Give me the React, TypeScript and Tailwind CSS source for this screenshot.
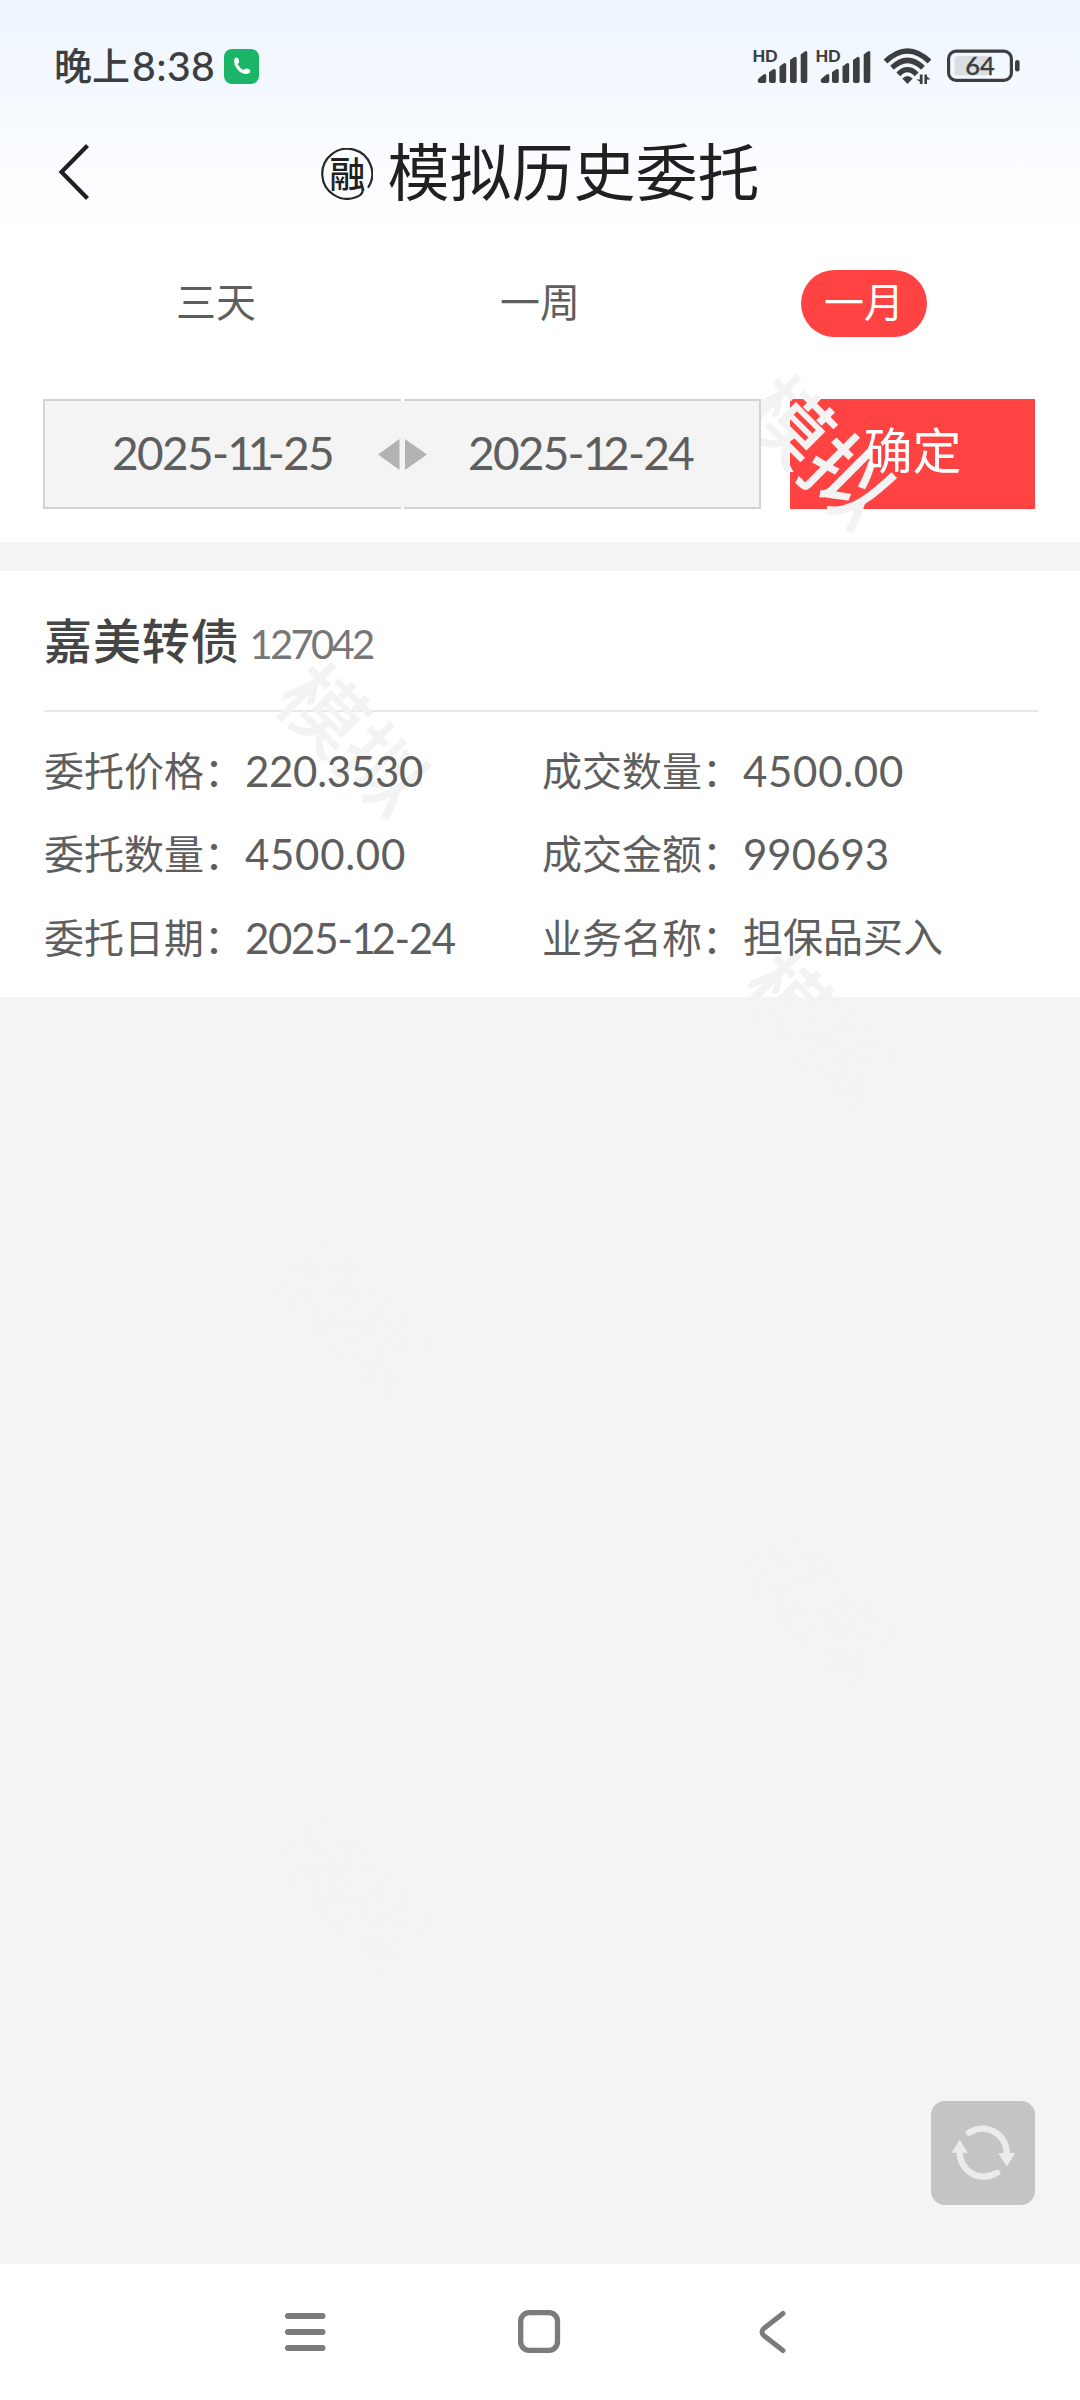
import React from "react";

const latin = "font-['Lato','Noto_Sans_CJK_SC',sans-serif]";

const watermarks = [
  { left: 821, top: 448 },
  { left: 356, top: 736 },
  { left: 821, top: 1025 },
  { left: 356, top: 1313 },
  { left: 821, top: 1602 },
  { left: 356, top: 1890 },
];

function Watermarks() {
  return (
    <div className="pointer-events-none absolute inset-0 overflow-hidden">
      {watermarks.map((w) => (
        <span
          key={`${w.left}-${w.top}`}
          className="absolute flex h-[84px] w-[168px] -translate-x-1/2 -translate-y-1/2 rotate-45 items-center justify-center text-[84px] leading-none font-medium whitespace-nowrap text-[#f3f3f3]"
          style={{ left: w.left, top: w.top }}
        >
          模拟
        </span>
      ))}
    </div>
  );
}

function Signal() {
  return (
    <svg className="h-[36px] w-[56px]" viewBox="-3 0 56 36" fill="#3c3e40">
      <text x="-2.4" y="14.3" fontSize="16.5" fontWeight="900" fontFamily="Lato" textLength="25">HD</text>
      <path d="M3.7 30.5 8.5 26.6Q11.3 25 11.3 27.5V33Q11.3 35 9.3 35H5.2Q2.7 35 2.7 32.5Q2.7 31.3 3.7 30.5Z" />
      <path d="M14 24.2 18 21.3Q20.8 20 20.8 23V33Q20.8 35 19 35H16Q14 35 14 33Z" />
      <path d="M24.5 18.5 28.5 15.4Q31.2 14 31.2 17V33Q31.2 35 29.3 35H26.4Q24.5 35 24.5 33Z" />
      <path d="M35 12 39 9.2Q41.7 8 41.7 11V33Q41.7 35 39.8 35H37Q35 35 35 33Z" />
      <path d="M45.7 6.5 49.7 3.4Q52.3 2 52.3 5V33Q52.3 35 50.5 35H47.6Q45.7 35 45.7 33Z" />
    </svg>
  );
}

function Wifi() {
  return (
    <svg className="h-[38px] w-[50px]" viewBox="0 0 50 38" fill="none" stroke="#3c3e40">
      <path d="M2.5 14.5Q24.5-6.5 46.5 14.5" strokeWidth="5.4" />
      <path d="M9 20.8Q24.5 6 40 20.8" strokeWidth="5.4" />
      <path d="M15.3 27.3Q24.5 18 33.7 27.3" strokeWidth="5.4" />
      <path d="M19.3 31.5Q24.5 26.5 29.7 31.5L24.5 37Z" fill="#3c3e40" stroke="none" />
      <path d="M39.6 27.5V37H36.8V34.5L33.2 32.4H36.8V27.5ZM41.4 37V27.5H44V29.4L47.6 32.4H44V37Z" fill="#3c3e40" stroke="none" />
    </svg>
  );
}

function Battery() {
  return (
    <svg className="h-[34px] w-[74px]" viewBox="0 0 74 34" fill="none">
      <rect x="1.6" y="2.1" width="62.8" height="29.3" rx="7.5" stroke="#3c3e40" strokeWidth="3.2" />
      <rect x="7.5" y="7" width="34" height="19.5" rx="3.5" fill="#dadde1" />
      <rect x="68" y="11" width="4.6" height="11.5" rx="2.2" fill="#3c3e40" />
      <text x="33" y="26" fontSize="25.5" fontWeight="500" fontFamily="Lato" textAnchor="middle" fill="#3c3e40" stroke="#3c3e40" strokeWidth=".3">64</text>
    </svg>
  );
}

function StatusBar() {
  return (
    <div className="flex h-[106px] items-center pt-[26px] pr-[59px] pl-[54px] text-[#3c3e40]">
      <span className="-mt-[4px] text-[38px] leading-none font-medium">晚上</span>
      <span className={`${latin} -mt-[1px] ml-[2px] text-[41px] leading-none font-medium tracking-[0.4px]`}>8:38</span>
      <span className="ml-[9px] flex size-[35px] items-center justify-center rounded-[8px] bg-[#1ab566]">
        <svg className="size-[18px]" viewBox="0 0 18 18" fill="white">
          <path d="M1.5 1.5Q3-.2 4.8 1 6.8 4 6 5.4L4.6 7.3Q6.5 11 10.4 13L12.4 11.8Q13.5 11 16.8 12.8 18 14.3 16.4 16 11 19 5.2 13.2 0 8 1.5 1.5Z" />
        </svg>
      </span>
      <div className="ml-auto flex items-center">
        <Signal />
        <span className="ml-[7px] flex"><Signal /></span>
        <span className="ml-[12px] flex"><Wifi /></span>
        <span className="ml-[14px] flex"><Battery /></span>
      </div>
    </div>
  );
}

function TitleBar() {
  return (
    <div className="relative flex h-[134px] items-center justify-center pb-[1px]">
      <svg className="absolute top-[37px] left-[57px] h-[58px] w-[34px]" viewBox="0 0 34 58" fill="none">
        <path d="M30.5 2.5 4.5 29 30.5 55.5" stroke="#202020" strokeWidth="4.2" />
      </svg>
      <span className="relative mt-[3px] mr-[14px] ml-[1px] flex size-[52px] items-center justify-center text-[36px] leading-none font-medium text-[#202020]">
        <svg className="absolute inset-0 size-[52px]" viewBox="0 0 52 52" fill="none" stroke="#282828" strokeWidth="2.2">
          <path d="M47 39.7A25 25 0 1 0 35.5 49Q42 46.5 41.7 41.5" />
        </svg>
        <span className="-mt-[4px]">融</span>
      </span>
      <h1 className="-mt-[7px] text-[62px] leading-none font-normal text-[#202020]">模拟历史委托</h1>
    </div>
  );
}

function RangeTabs() {
  return (
    <div className="grid h-[127px] grid-cols-3 items-center px-[54px] text-[40px] leading-none text-[#5e5e5e]">
      <span className="-mt-[7px] text-center">三天</span>
      <span className="-mt-[7px] text-center">一周</span>
      <span className="mx-auto flex h-[67px] w-[126px] items-center justify-center rounded-full bg-[#ff4343] pb-[7px] text-white">
        一月
      </span>
    </div>
  );
}

/* Sets the narrow digit 1 tighter than the other figures. */
function DateText({ value, ones }: { value: string; ones: string }) {
  return (
    <>
      {value.split(/(1+)/).map((part, i) => (
        <span key={i} className={part.startsWith("1") ? ones : ""}>{part}</span>
      ))}
    </>
  );
}

function DateFilter() {
  return (
    <div className="flex h-[175px] items-start pt-[32px] pl-[43px]">
      <div className={`${latin} relative z-10 flex h-[110px] w-[718px] items-center border-2 border-[#d2d2d2] bg-[#f4f4f4] text-[46px] leading-none text-[#5e5e5e]`}>
        <span className="-mt-[2px] ml-[67px] w-[222px] tracking-[-1.7px] whitespace-nowrap">
          <DateText value="2025-11-25" ones="tracking-[-6.5px]" />
        </span>
        <svg className="ml-[44px] h-[34px] w-[50px]" viewBox="0 0 50 34" fill="#b3b3b3">
          <path d="M0 17.5 21.5 2V33ZM27 2 49 17.5 27 33Z" />
        </svg>
        <span className="-mt-[2px] ml-[40px] w-[225px] tracking-[-1.8px] whitespace-nowrap">
          <DateText value="2025-12-24" ones="tracking-[-6.5px]" />
        </span>
        <span className="absolute -top-[2px] left-[356px] h-[2px] w-[3px] bg-white" />
        <span className="absolute -bottom-[2px] left-[356px] h-[2px] w-[3px] bg-white" />
      </div>
      <div className="ml-[29px] flex h-[110px] w-[245px] items-center justify-center bg-[#ff4343] pb-[14px] text-[49px] leading-none text-white">
        <span className="relative z-10">确定</span>
      </div>
    </div>
  );
}

const fields = [
  { label: "委托价格", value: "220.3530", cls: "text-[42px] -mt-[1px] tracking-[-0.3px]" },
  { label: "成交数量", value: "4500.00", cls: "text-[42px] -mt-[1px] tracking-[0.7px]" },
  { label: "委托数量", value: "4500.00", cls: "text-[42px] -mt-[1px] tracking-[0.7px]" },
  { label: "成交金额", value: "990693", cls: "text-[42px] -mt-[1px] tracking-[0px]" },
  { label: "委托日期", value: "2025-12-24", cls: "text-[42px] -mt-[1px] tracking-[-1.3px]", ones: "tracking-[-4.5px]" },
  { label: "业务名称", value: "担保品买入", cls: "text-[40px] -mt-[3px]" },
];

function OrderCard() {
  return (
    <section className="h-[426px] bg-white">
      <div className="mr-[42px] ml-[44px] flex h-[141px] items-baseline border-b-2 border-[#e8e8e8] pt-[43px]">
        <span className="relative z-10 text-[48px] leading-none font-medium tracking-[0.9px] text-[#454545]">嘉美转债</span>
        <span className={`${latin} relative z-10 ml-[10px] text-[40px] leading-none tracking-[-2.7px] text-[#777777]`}>127042</span>
      </div>
      <div className="grid grid-cols-[498px_1fr] pt-[18px] pl-[44px]">
        {fields.map((f) => (
          <div key={f.label} className="relative z-10 flex h-[83.3px] items-center text-[40px] leading-none text-[#5e5e5e]">
            <span className="-mt-[5px] w-[201px]">{f.label}：</span>
            <span className={`${latin} leading-none whitespace-nowrap ${f.cls}`}>
              {f.ones ? <DateText value={f.value} ones={f.ones} /> : f.value}
            </span>
          </div>
        ))}
      </div>
    </section>
  );
}

function RefreshButton() {
  return (
    <button className="absolute right-[45px] bottom-[59px] size-[104px] rounded-[14px] bg-[#c4c4c4]">
      <svg className="size-[104px]" viewBox="0 0 104 104" fill="none">
        <path d="M38 31.7A24.3 24.3 0 0 1 75.7 53" stroke="#ebebeb" strokeWidth="6.3" strokeLinecap="round" />
        <path d="M66.3 71.7A24.3 24.3 0 0 1 28.7 51" stroke="#ebebeb" strokeWidth="6.3" strokeLinecap="round" />
        <path d="M67.3 52H84.2L75.7 65.7ZM20.5 51.8H36.8L28.7 38.7Z" fill="#ebebeb" />
      </svg>
    </button>
  );
}

function NavBar() {
  return (
    <nav className="flex h-[136px] items-start bg-white pt-[43px] pl-[283px]">
      <svg className="h-[50px] w-[45px]" viewBox="0 0 45 50" fill="none" stroke="#7b7b7b" strokeWidth="6" strokeLinecap="round">
        <path d="M5 9H39.5M5 25H39.5M5 41H39.5" />
      </svg>
      <svg className="ml-[188px] h-[50px] w-[46px]" viewBox="0 0 46 50" fill="none" stroke="#7b7b7b" strokeWidth="5.3">
        <rect x="4.7" y="5.7" width="36.8" height="37.6" rx="8.5" />
      </svg>
      <svg className="ml-[194px] h-[50px] w-[32px]" viewBox="0 0 32 50" fill="none" stroke="#7b7b7b" strokeWidth="5" strokeLinecap="round">
        <path d="M27 6.5 7.8 21.5Q4.2 25 7.8 28.5L27 43.5" />
      </svg>
    </nav>
  );
}

export default function App() {
  return (
    <div className="relative flex h-[2400px] w-[1080px] flex-col overflow-hidden bg-white font-['Noto_Sans_CJK_SC',sans-serif]">
      <header className="h-[240px] bg-linear-to-b from-[#eef5ff] via-[#f8fbff] via-55% to-white">
        <StatusBar />
        <TitleBar />
      </header>
      <RangeTabs />
      <DateFilter />
      <div className="h-[29px] bg-[#f4f4f4]" />
      <OrderCard />
      <main className="relative flex-1 bg-[#f4f4f4]">
        <RefreshButton />
      </main>
      <NavBar />
      <Watermarks />
    </div>
  );
}
